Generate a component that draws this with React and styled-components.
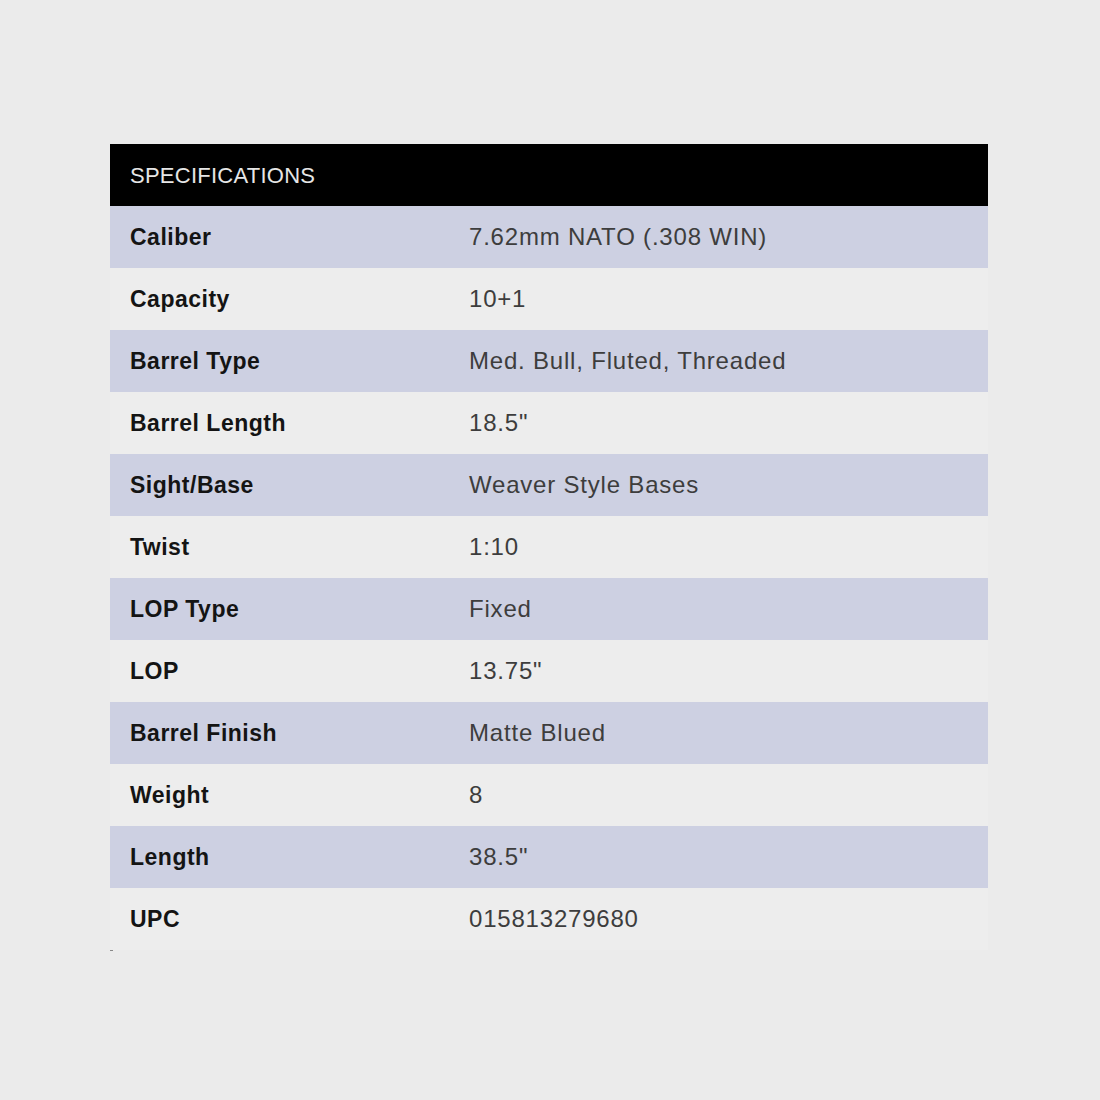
import React from "react";
import styled, { createGlobalStyle } from "styled-components";

const Global = createGlobalStyle`
  html, body { margin: 0; padding: 0; background: #ebebeb; }
  body { font-family: "Liberation Sans", Arial, sans-serif; }
`;

const Page = styled.div`
  width: 1100px;
  height: 1100px;
  box-sizing: border-box;
  padding: 144px 0 0 110px;
  background: #ebebeb;
`;

const Table = styled.div`
  width: 878px;
  display: flex;
  flex-direction: column;
`;

const Header = styled.div`
  height: 62px;
  background: #000;
  color: #e6e6e6;
  display: flex;
  align-items: center;
  padding-left: 20px;
  padding-top: 2px;
  box-sizing: border-box;
  font-size: 22px;
  letter-spacing: 0.25px;
`;

const Row = styled.div`
  height: 62px;
  display: grid;
  grid-template-columns: 359px 1fr;
  align-items: center;
  background: ${(p) => (p.$striped ? "#cdd0e2" : "#ededed")};
`;

const Label = styled.div`
  padding-left: 20px;
  font-weight: 700;
  font-size: 23px;
  color: #141414;
  letter-spacing: 0.5px;
`;

const Value = styled.div`
  font-size: 24px;
  color: #3d3d3d;
  letter-spacing: 0.8px;
`;

const Tick = styled.div`
  width: 3px;
  height: 1px;
  background: #888;
`;

const specs = [
  ["Caliber", "7.62mm NATO (.308 WIN)"],
  ["Capacity", "10+1"],
  ["Barrel Type", "Med. Bull, Fluted, Threaded"],
  ["Barrel Length", "18.5\""],
  ["Sight/Base", "Weaver Style Bases"],
  ["Twist", "1:10"],
  ["LOP Type", "Fixed"],
  ["LOP", "13.75\""],
  ["Barrel Finish", "Matte Blued"],
  ["Weight", "8"],
  ["Length", "38.5\""],
  ["UPC", "015813279680"],
];

export default function App() {
  return (
    <Page>
      <Global />
      <Table>
        <Header>SPECIFICATIONS</Header>
        {specs.map(([k, v], i) => (
          <Row key={k} $striped={i % 2 === 0}>
            <Label>{k}</Label>
            <Value>{v}</Value>
          </Row>
        ))}
        <Tick />
      </Table>
    </Page>
  );
}
